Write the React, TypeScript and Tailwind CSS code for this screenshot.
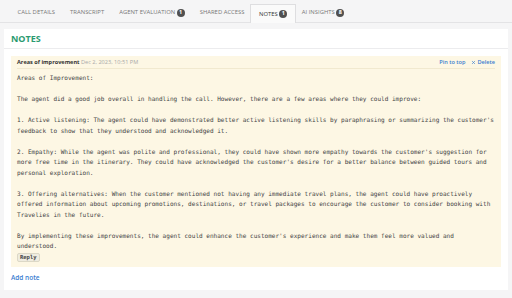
import { X } from 'lucide-react';

const tabs = [
  { label: 'CALL DETAILS' },
  { label: 'TRANSCRIPT' },
  { label: 'AGENT EVALUATION', count: 1 },
  { label: 'SHARED ACCESS' },
  { label: 'NOTES', count: 1, active: true },
  { label: 'AI INSIGHTS', count: 8 },
];

const noteLines = [
  'Areas of Improvement:',
  '',
  'The agent did a good job overall in handling the call. However, there are a few areas where they could improve:',
  '',
  "1. Active listening: The agent could have demonstrated better active listening skills by paraphrasing or summarizing the customer's",
  'feedback to show that they understood and acknowledged it.',
  '',
  "2. Empathy: While the agent was polite and professional, they could have shown more empathy towards the customer's suggestion for",
  "more free time in the itinerary. They could have acknowledged the customer's desire for a better balance between guided tours and",
  'personal exploration.',
  '',
  '3. Offering alternatives: When the customer mentioned not having any immediate travel plans, the agent could have proactively',
  'offered information about upcoming promotions, destinations, or travel packages to encourage the customer to consider booking with',
  'Travelies in the future.',
  '',
  "By implementing these improvements, the agent could enhance the customer's experience and make them feel more valued and",
  'understood.',
];

function Badge({ n }: { n: number }) {
  return (
    <span className="ml-[1.5px] inline-flex h-[8px] w-[8px] items-center justify-center rounded-full bg-[#505050] text-[5.5px] leading-none font-bold text-white">
      {n}
    </span>
  );
}

function App() {
  return (
    <div className="h-[298px] w-[512px] overflow-hidden bg-[#f5f5f6] font-['Open_Sans',sans-serif] text-[#333]">
      <div className="flex h-[23px] items-end border-b border-[#e3e3e5] pl-[10px]">
        {tabs.map((t) => (
          <div
            key={t.label}
            className={
              t.active
                ? 'mx-[-2px] mb-[-1px] flex h-[19px] items-center border border-b-0 border-[#dedee0] bg-[#fafafa] px-[8px] text-[5.9px] text-[#333]'
                : 'flex h-[19px] items-center border border-transparent px-[6.5px] text-[5.9px] text-[#777]'
            }
          >
            {t.label}
            {t.count !== undefined && <Badge n={t.count} />}
          </div>
        ))}
      </div>

      <div className="mx-[4px] mt-[6px] h-[261px] bg-white">
        <div className="flex h-[20px] items-center border-b border-[#ececee] px-[7px] pt-[1px]">
          <div className="text-[9px] font-bold text-[#2b9a70]">NOTES</div>
        </div>

        <div className="mx-[7px] mt-[7px] h-[211px] bg-[#fdf7e4]">
          <div className="mx-[6px] flex h-[13px] items-center justify-between border-b border-[#f1e9cf] pt-[1px] text-[5.6px]">
            <div>
              <span className="font-bold text-[#333]">Areas of improvement</span>{' '}
              <span className="text-[#a9a9a9]">Dec 2, 2023, 10:51 PM</span>
            </div>
            <div className="flex items-center gap-[6px] font-semibold text-[#3a7dd0]">
              <span>Pin to top</span>
              <span className="flex items-center">
                <X className="mr-[1px] h-[5px] w-[5px]" strokeWidth={3} />
                Delete
              </span>
            </div>
          </div>

          <div className="px-[6px] pt-[4px] font-['DejaVu_Sans_Mono',monospace] text-[6.05px] leading-[10.5px] whitespace-pre text-[#444]">
            {noteLines.map((l, i) => (
              <div key={i} className="h-[10.5px]">
                {l}
              </div>
            ))}
          </div>

          <div className="px-[6px] pt-[1px]">
            <button className="flex h-[9px] items-center rounded-[2px] border border-[#dcd8c6] bg-[#efece0] px-[2px] font-['DejaVu_Sans_Mono',monospace] text-[5.5px] font-bold text-[#444]">
              Reply
            </button>
          </div>
        </div>

        <div className="px-[7px] pt-[6px] text-[6.5px] font-semibold text-[#3a7dd0]">Add note</div>
      </div>
    </div>
  );
}

export default App;
